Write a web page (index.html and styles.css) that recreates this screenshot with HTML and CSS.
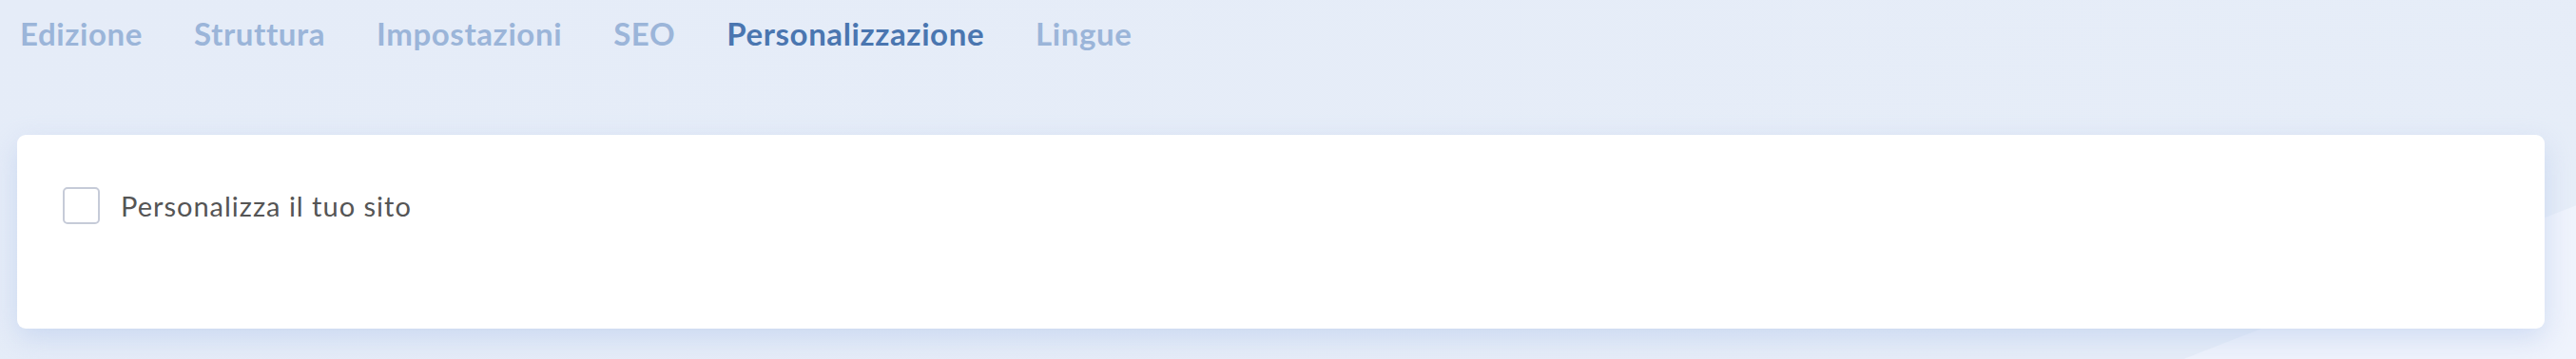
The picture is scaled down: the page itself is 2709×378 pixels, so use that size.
FILE: index.html
```html
<!DOCTYPE html>
<html lang="it">
<head>
<meta charset="utf-8">
<title>Personalizzazione</title>
<link rel="stylesheet" href="styles.css">
</head>
<body>
<div class="page">
  <nav class="tabs">
    <a class="tab">Edizione</a>
    <a class="tab">Struttura</a>
    <a class="tab">Impostazioni</a>
    <a class="tab">SEO</a>
    <a class="tab active">Personalizzazione</a>
    <a class="tab">Lingue</a>
  </nav>
  <section class="card">
    <label class="check-row">
      <span class="checkbox"></span>
      <span class="check-label">Personalizza il tuo sito</span>
    </label>
  </section>
</div>
</body>
</html>
```
FILE: styles.css
```css
html, body {
  margin: 0;
  padding: 0;
}
body {
  width: 2709px;
  height: 378px;
  overflow: hidden;
  font-family: Lato, "Liberation Sans", sans-serif;
  background: #e6edf8;
}
.page {
  position: relative;
  height: 378px;
  box-sizing: border-box;
  padding: 13px 33px 0 18px;
  background: linear-gradient(-21.4deg, #eff3fc 0, #eff3fc 150px, #e6edf8 151px, #e5ecf8 100%);
}
.tabs {
  display: flex;
  gap: 54px;
  padding-left: 3px;
  height: 44px;
  align-items: center;
}
.tab {
  font-size: 33px;
  font-weight: 700;
  letter-spacing: 0.6px;
  color: #9bb5d9;
  line-height: 44px;
  cursor: pointer;
}
.tab.active {
  color: #4a76b0;
}
.card {
  margin-top: 85px;
  height: 204px;
  box-sizing: border-box;
  background: #fff;
  border-radius: 9px;
  box-shadow: 0 10px 28px rgba(170, 192, 232, 0.45);
  padding: 55px 48px;
}
.check-row {
  display: flex;
  align-items: center;
  gap: 22px;
}
.checkbox {
  width: 39px;
  height: 39px;
  box-sizing: border-box;
  border: 2px solid #c6cbd8;
  border-radius: 5px;
  background: #fff;
}
.check-label {
  font-size: 29px;
  letter-spacing: 1px;
  color: #555555;
}
```
